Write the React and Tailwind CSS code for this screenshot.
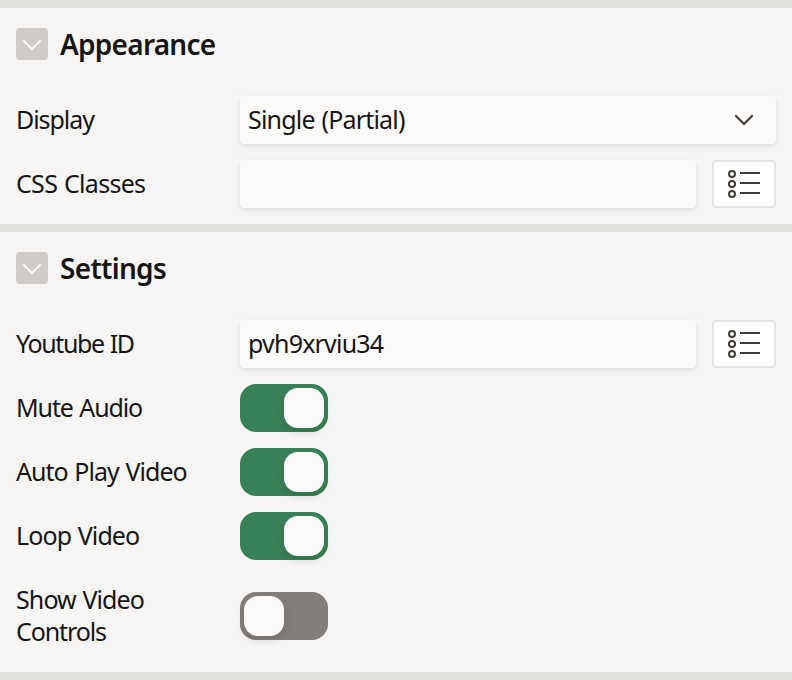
import { clsx } from "clsx";

function Section({ title, titleClass, children, className }) {
  return (
    <section className={clsx("border-t-8 border-[#e4e2de] px-4", className)}>
      <header className="flex h-[72px] items-center gap-3">
        <button aria-label="Collapse" className="flex size-8 items-center justify-center rounded bg-[#d1cbc7]">
          <svg className="size-8" viewBox="0 0 32 32" fill="none" stroke="#fbf9f8" strokeWidth="2">
            <path d="M7.3 12.5 L16 21 L24.7 12.5" />
          </svg>
        </button>
        <h2 className={clsx("whitespace-nowrap text-[28px] leading-8 font-semibold", titleClass)}>{title}</h2>
      </header>
      <div className="flex flex-col gap-4 pt-4">{children}</div>
    </section>
  );
}

function Row({ label, labelClass, children }) {
  return (
    <div className="flex items-center">
      <div className={clsx("w-56 shrink-0 -translate-y-px leading-8 [word-spacing:1px]", labelClass)}>{label}</div>
      <div className="flex flex-1 gap-4">{children}</div>
    </div>
  );
}

function Field({ children, icon }) {
  return (
    <div className="flex h-12 flex-1 items-center justify-between rounded bg-[#fcfbfa] px-2 shadow-[0_2px_5px_rgba(0,0,0,0.1)]">
      <span className="tracking-[-0.8px] [word-spacing:1px]">{children}</span>
      {icon}
    </div>
  );
}

function ListButton() {
  return (
    <button aria-label="Pick value" className="h-12 w-16 rounded border-2 border-[#e5e5e5] bg-white">
      <svg className="h-11 w-[60px]" viewBox="0 0 60 44" fill="none" stroke="#403c3a" strokeWidth="2">
        <circle cx="18" cy="12" r="3" />
        <circle cx="18" cy="22" r="3" />
        <circle cx="18" cy="32" r="3" />
        <path d="M26 11h20M26 21h20M26 31h20" />
      </svg>
    </button>
  );
}

function Toggle({ on }) {
  return (
    <button
      role="switch"
      aria-checked={on}
      className={clsx("flex h-12 w-[88px] rounded-2xl p-1", on ? "justify-end bg-[#388055]" : "justify-start bg-[#827e7a]")}
    >
      <span className="size-10 rounded-[14px] bg-[#fcfbfa] shadow-[0_4px_8px_rgba(0,0,0,0.12)]" />
    </button>
  );
}

function SelectArrow() {
  return (
    <svg className="size-12" viewBox="0 0 48 48" fill="none" stroke="#403c3a" strokeWidth="2">
      <path d="M15.3 19.2 L24 28 L32.7 19.2" />
    </svg>
  );
}

export default function App() {
  return (
    <main className="flex h-[680px] w-[792px] flex-col overflow-hidden bg-[#f6f5f3] font-['Noto_Sans',sans-serif] text-[25px] text-[#161513]">
      <Section title="Appearance" titleClass="tracking-[-0.75px]" className="h-56">
        <Row label="Display" labelClass="tracking-[-1.05px]">
          <Field icon={<SelectArrow />}>Single (Partial)</Field>
        </Row>
        <Row label="CSS Classes" labelClass="tracking-[-0.7px]">
          <Field />
          <ListButton />
        </Row>
      </Section>
      <Section title="Settings" titleClass="tracking-[-0.7px]" className="h-[448px]">
        <Row label="Youtube ID" labelClass="tracking-[-1.4px]">
          <Field>pvh9xrviu34</Field>
          <ListButton />
        </Row>
        <Row label="Mute Audio" labelClass="tracking-[-1.1px]">
          <Toggle on />
        </Row>
        <Row label="Auto Play Video" labelClass="tracking-[-0.95px]">
          <Toggle on />
        </Row>
        <Row label="Loop Video" labelClass="tracking-[-0.9px]">
          <Toggle on />
        </Row>
        <div className="pt-2">
          <Row
            labelClass="tracking-[-0.9px]"
            label={
              <>
                Show Video
                <br />
                <span className="tracking-[-1.1px]">Controls</span>
              </>
            }
          >
            <Toggle on={false} />
          </Row>
        </div>
      </Section>
      <div className="h-2 bg-[#e4e2de]" />
    </main>
  );
}
